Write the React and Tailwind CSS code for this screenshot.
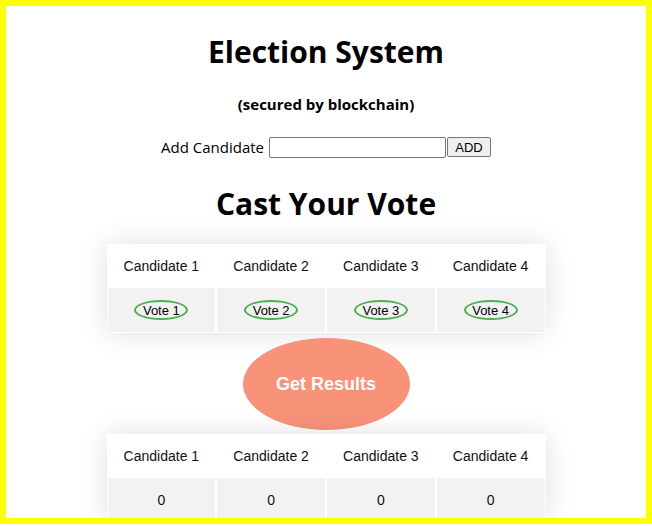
import React from "react";

const heading = { fontFamily: '"Open Sans", "Noto Sans", sans-serif' };

function Row({ cells, vote }) {
  return (
    <div className="grid grid-cols-4 gap-x-[2px] px-[1px]">
      {cells.map((c, i) => (
        <div key={i} className="h-[44px] flex items-center justify-center bg-[#f2f2f2] text-[14px] text-[#111]">
          {vote ? (
            <button className="h-[20px] w-[54px] rounded-[50%] border-2 border-[#4caf50] text-[13px] leading-none text-black bg-transparent">
              {c}
            </button>
          ) : (
            c
          )}
        </div>
      ))}
    </div>
  );
}

function Table({ bottom, vote }) {
  const names = ["Candidate 1", "Candidate 2", "Candidate 3", "Candidate 4"];
  return (
    <div
      className="w-[439px] mx-auto bg-white shadow-[0_0_25px_rgba(0,0,0,0.13)]"
      style={{ fontFamily: '"Liberation Sans", Arial, sans-serif' }}
    >
      <div className="grid grid-cols-4 h-[44px]">
        {names.map((n) => (
          <div key={n} className="flex items-center justify-center text-[14px] text-[#111]">
            {n}
          </div>
        ))}
      </div>
      <Row cells={bottom} vote={vote} />
      <div className="h-[1px]" />
    </div>
  );
}

export default function App() {
  return (
    <div className="w-[652px] h-[524px] border-[6px] border-[#ffff00] bg-white overflow-hidden flex flex-col">
      <h1 className="mt-[27px] text-center text-[30px] leading-[38px] font-bold text-black" style={heading}>
        Election System
      </h1>
      <div className="mt-[23px] text-center text-[15px] leading-[20px] font-bold text-black" style={heading}>
        (secured by blockchain)
      </div>
      <div className="mt-[22px] flex items-center justify-center h-[22px]">
        <span className="text-[15px] mr-[5px] text-black" style={heading}>
          Add Candidate
        </span>
        <input className="w-[177px] h-[21px] border border-[#767676] rounded-[2px] bg-white" />
        <button
          className="ml-[1px] h-[20px] w-[44px] border border-[#767676] rounded-[2px] bg-[#efefef] text-[13px] leading-none text-black"
          style={{ fontFamily: '"Liberation Sans", Arial, sans-serif' }}
        >
          ADD
        </button>
      </div>
      <h1 className="mt-[27px] text-center text-[30px] leading-[38px] font-bold text-black" style={heading}>
        Cast Your Vote
      </h1>
      <div className="mt-[21px]">
        <Table vote bottom={["Vote 1", "Vote 2", "Vote 3", "Vote 4"]} />
      </div>
      <div className="mt-[5px] flex justify-center">
        <button
          className="w-[167px] h-[92px] rounded-[50%] bg-[#f8937a] text-white font-bold text-[18px]"
          style={{ fontFamily: '"Liberation Sans", Arial, sans-serif' }}
        >
          Get Results
        </button>
      </div>
      <div className="mt-[4px]">
        <Table bottom={["0", "0", "0", "0"]} />
      </div>
    </div>
  );
}
